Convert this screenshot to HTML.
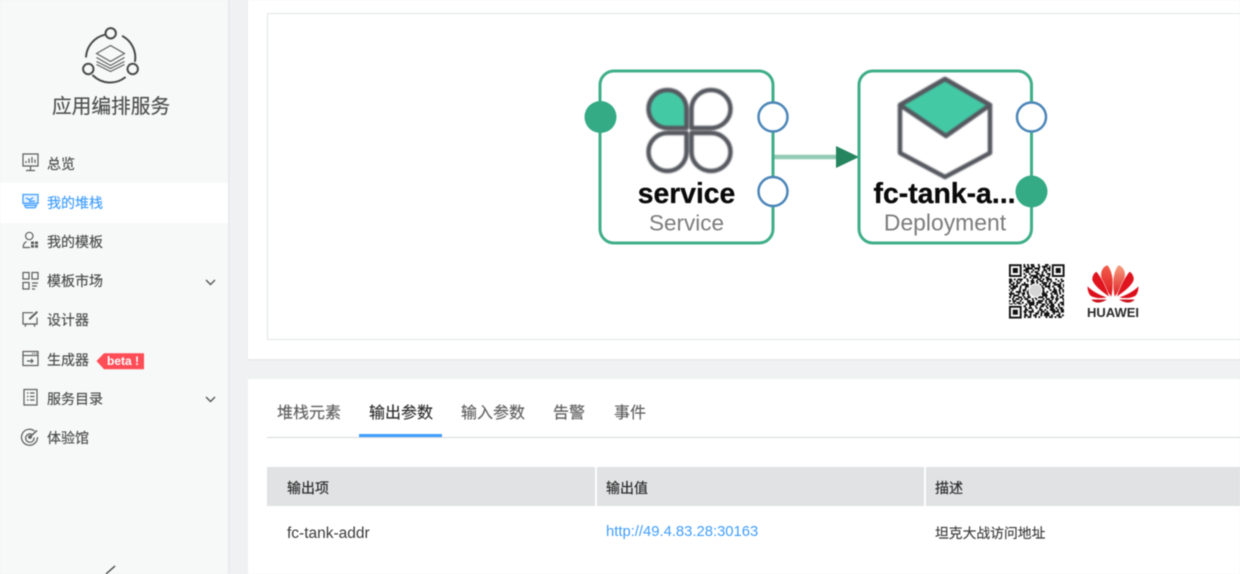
<!DOCTYPE html>
<html lang="zh">
<head>
<meta charset="utf-8">
<title>应用编排服务</title>
<style>
html,body{margin:0;padding:0;width:1240px;height:574px;overflow:hidden;background:#f0f1f2}
body{position:relative;font-family:"Liberation Sans","Noto Sans CJK SC",sans-serif;color:#555}
#wrap{position:absolute;left:0;top:0;width:1240px;height:574px;filter:blur(.4px)}
.abs{position:absolute;white-space:nowrap}
.side{position:absolute;left:0;top:0;width:228px;height:574px;background:#f7f8f8;box-shadow:1px 0 2px rgba(0,0,0,.05)}
.active{position:absolute;left:0;top:183px;width:228px;height:39.5px;background:#fff}
.m{position:absolute;left:47px;font-size:14px;line-height:20px;color:#4a4a4a;white-space:nowrap;-webkit-text-stroke:.15px currentColor}
.card{position:absolute;background:#fff}
.tab{position:absolute;top:402.5px;font-size:16px;line-height:22px;color:#606060;white-space:nowrap;-webkit-text-stroke:.15px currentColor}
.th{position:absolute;top:477.5px;font-size:14px;line-height:20px;color:#2c2c2c;white-space:nowrap;-webkit-text-stroke:.2px currentColor}
svg{position:absolute;left:0;top:0;overflow:visible}
.p1{stroke-dasharray:3.6 1.8 1.8 3.6 5.4 1.8 1.8 1.8 3.6 3.6 1.8 5.4}
.p2{stroke-dasharray:1.8 1.8 5.4 1.8 1.8 3.6 3.6 1.8 1.8 1.8 3.6 3.6}
.p3{stroke-dasharray:5.4 3.6 1.8 1.8 3.6 1.8 1.8 3.6 7.2 1.8}
.p4{stroke-dasharray:1.8 3.6 3.6 1.8 1.8 1.8 5.4 3.6 1.8 3.6}
.p5{stroke-dasharray:3.6 3.6 1.8 1.8 1.8 5.4 1.8 1.8 3.6 1.8 1.8 1.8}
</style>
</head>
<body>
<div id="wrap">
<div class="side"></div>
<div class="active"></div>
<div class="card" style="left:248px;top:0;width:992px;height:359px;box-shadow:0 1px 2px rgba(0,0,0,.05)"></div>
<div class="card" style="left:267px;top:13px;width:973px;height:327px;border:1px solid #e2e4e6;border-right:0;box-sizing:border-box"></div>
<div class="card" style="left:248px;top:379px;width:992px;height:195px"></div>

<div class="abs" style="left:52px;top:93px;font-size:19.7px;line-height:28px;color:#4d4d4d;-webkit-text-stroke:.15px currentColor">应用编排服务</div>
<div class="m" style="top:154px">总览</div>
<div class="m" style="top:193px;color:#409eff">我的堆栈</div>
<div class="m" style="top:232px">我的模板</div>
<div class="m" style="top:271px">模板市场</div>
<div class="m" style="top:310px">设计器</div>
<div class="m" style="top:349.5px">生成器</div>
<div class="m" style="top:389px">服务目录</div>
<div class="m" style="top:427.5px">体验馆</div>
<div class="abs" style="left:107px;top:354px;font-size:12px;line-height:15px;font-weight:bold;color:#fff;z-index:3">beta !</div>

<div class="tab" style="left:277px">堆栈元素</div>
<div class="tab" style="left:369px;color:#2e2e2e">输出参数</div>
<div class="tab" style="left:461px">输入参数</div>
<div class="tab" style="left:553px">告警</div>
<div class="tab" style="left:614px">事件</div>
<div class="abs" style="left:267px;top:436.5px;width:973px;height:1px;background:#d6d9da"></div>
<div class="abs" style="left:359px;top:434px;width:83px;height:3px;background:#409eff"></div>

<div class="abs" style="left:267px;top:467px;width:973px;height:39px;background:#e0e2e3"></div>
<div class="abs" style="left:595px;top:467px;width:2px;height:39px;background:#fff"></div>
<div class="abs" style="left:924px;top:467px;width:2px;height:39px;background:#fff"></div>
<div class="th" style="left:287px">输出项</div>
<div class="th" style="left:606px">输出值</div>
<div class="th" style="left:935px">描述</div>
<div class="abs" style="left:287px;top:523.5px;font-size:15.5px;line-height:20px;color:#3c3c3c">fc-tank-addr</div>
<div class="abs" style="left:606px;top:522px;font-size:14.8px;line-height:20px;color:#409eff">http://49.4.83.28:30163</div>
<div class="abs" style="left:935px;top:524px;font-size:13.8px;line-height:20px;color:#3c3c3c;-webkit-text-stroke:.15px currentColor">坦克大战访问地址</div>

<svg width="1240" height="574" viewBox="0 0 1240 574" xmlns="http://www.w3.org/2000/svg">
  <defs>
    <linearGradient id="hw1" x1="0" y1="0" x2="0" y2="1"><stop offset="0" stop-color="#f2604c"/><stop offset="1" stop-color="#e0141f"/></linearGradient>
    <linearGradient id="hw2" x1="0" y1="0" x2="0" y2="1"><stop offset="0" stop-color="#f6a080"/><stop offset="1" stop-color="#e01c22"/></linearGradient>
  </defs>
  <!-- sidebar logo -->
  <g fill="none" stroke="#4a4a4a" stroke-width="2" stroke-linecap="round">
    <circle cx="110.700" cy="33.300" r="5.200"/>
    <circle cx="88.300" cy="69" r="5.200"/>
    <circle cx="132.700" cy="69" r="5.200"/>
    <path d="M104.500 34.800A24.500 24.500 0 0 0 86 56.700"/>
    <path d="M122.800 36.200A24.500 24.500 0 0 1 135 61.200"/>
    <path d="M93 75.500A24.500 24.500 0 0 0 125 77.500"/>
  </g>
  <g fill="none" stroke="#5a5a5a" stroke-width="1.100">
    <path d="M110.500 45.500L124.500 53.500L110.500 61.500L96.500 53.500Z"/>
    <path d="M96.500 57.500L110.500 65.500L124.500 57.500"/>
    <path d="M96.500 61.500L110.500 68.500L124.500 61.500"/>
    <path d="M96.500 64.500L110.500 71.500L124.500 64.500"/>
  </g>

  <!-- sidebar icons -->
  <g fill="none" stroke="#5c5c5c" stroke-width="1.200">
    <path d="M23 154H38V166H23Z"/>
    <path d="M26 163V161M29 163V158.500M32 163V157M35 163V159.500"/>
    <path d="M30.500 166V170M26 170.500H35"/>

    <path d="M26.500 241.500C24 243 23 245 23.300 247.500H30"/>
    <circle cx="29.300" cy="236" r="3.700"/>
    <g fill="#5c5c5c" stroke="none">
      <rect x="31" y="241.500" width="3" height="2.700"/><rect x="35" y="241.500" width="3" height="2.700"/>
      <rect x="31" y="245" width="3" height="2.700"/><rect x="35" y="245" width="3" height="2.700"/>
    </g>

    <rect x="23" y="272.500" width="6" height="6.500"/>
    <rect x="32" y="272.500" width="6" height="6.500"/>
    <rect x="23" y="282.500" width="6" height="6.500"/>
    <path d="M32 283H38M32 286H37M32 289H35"/>

    <path d="M33 312.700H23V324H37V317.500"/>
    <path d="M26 324L25 326.700M34 324L35 326.700"/>
    <path d="M29.300 319.300L37.300 311.700" stroke-width="2"/>

    <rect x="23" y="351.500" width="15" height="14"/>
    <path d="M23 355.500H38"/>
    <path d="M32 353.500H37" stroke-dasharray="1 1"/>
    <path d="M27 361H33M31 359L33 361L31 363"/>

    <rect x="24" y="389.500" width="13" height="15.500"/>
    <path d="M27 393H28.500M27 396.500H28.500M27 400H28.500M30 393H34.500M30 396.500H34.500M30 400H34.500"/>

    <path d="M34.500 431A8 8 0 1 0 37.500 437"/>
    <path d="M32 434.500A4.200 4.200 0 1 0 34 437.500"/>
    <circle cx="30" cy="437" r="1.300" fill="#5c5c5c"/>
    <path d="M30 437L37 430.500" stroke-width="1.500"/>
  </g>
  <g fill="none" stroke="#409eff" stroke-width="1.300">
    <path d="M23 194.500H38V203.300H23Z" fill="#e6f2ff"/>
    <path d="M24.500 205.300H36.500L35 207.700H26Z"/>
    <path d="M26 198L30 200L33 197.500M29 201.500L35 201"/>
  </g>

  <!-- chevrons -->
  <g fill="none" stroke="#555" stroke-width="1.400">
    <path d="M206 280L210.500 284.500L215 280"/>
    <path d="M206 397L210.500 401.500L215 397"/>
    <path d="M106 574L115 566" stroke="#444"/>
  </g>

  <!-- beta tag -->
  <path d="M96.500 361L104 353.300H144V369.300H104Z" fill="#ff4d57"/>

  <!-- edge -->
  <path d="M773 157H836" stroke="#93cbb6" stroke-width="4.500"/>
  <path d="M836 146L859 157L836 168Z" fill="#24855f"/>

  <!-- nodes -->
  <g fill="#fff" stroke="#3fae8a" stroke-width="3">
    <rect x="600" y="71" width="173" height="172" rx="14"/>
    <rect x="859" y="71" width="172.500" height="172" rx="14"/>
  </g>

  <!-- service icon -->
  <g stroke="#55585f" stroke-width="4.500" fill="none" stroke-linejoin="round" style="filter:blur(.7px)">
    <path d="M686.500 128H667.500A19 19 0 1 1 686.500 109Z" fill="#44c9a5"/>
    <path d="M691.500 128V109A19.500 19 0 1 1 711 128Z"/>
    <path d="M686.500 133V152A19 19 0 1 1 667.500 133Z"/>
    <path d="M691.500 133H711A19.500 19 0 1 1 691.500 152Z"/>
  </g>

  <!-- deployment icon -->
  <g stroke="#55585f" stroke-width="4.500" stroke-linejoin="round" style="filter:blur(.8px)">
    <path d="M900 105L945 79L990 105V153L945 177L900 153Z" fill="#fff"/>
    <path d="M900 105L945 79L990 105L946 136Z" fill="#44c9a5"/>
  </g>

  <!-- node text -->
  <text x="686.500" y="203" font-family="Liberation Sans" font-size="28.300" font-weight="700" fill="#0a0a0a" stroke="#0a0a0a" stroke-width=".3" text-anchor="middle">service</text>
  <text x="686.500" y="230.500" font-family="Liberation Sans" font-size="22.500" fill="#7c7c7c" text-anchor="middle">Service</text>
  <text x="873.500" y="203" font-family="Liberation Sans" font-size="28.400" font-weight="700" fill="#0a0a0a" stroke="#0a0a0a" stroke-width=".3">fc-tank-a...</text>
  <text x="945" y="230.500" font-family="Liberation Sans" font-size="22.900" fill="#7c7c7c" text-anchor="middle">Deployment</text>

  <!-- ports -->
  <circle cx="600.500" cy="117" r="16" fill="#34ab85"/>
  <g fill="#fff" stroke="#4c86b8" stroke-width="2.500">
    <circle cx="773" cy="117" r="14.500"/>
    <circle cx="773" cy="191.500" r="14.500"/>
    <circle cx="1031.500" cy="117" r="14.500"/>
  </g>
  <circle cx="1031.500" cy="191.500" r="16" fill="#34ab85"/>

  <!-- QR -->
  <g style="filter:blur(.35px)">
    <g stroke="#111" stroke-width="1.900" fill="none">
      <path class="p1" d="M1009 264.900H1064"/>
      <path class="p2" style="stroke-dashoffset:3" d="M1009 266.700H1064"/>
      <path class="p3" style="stroke-dashoffset:7" d="M1009 268.500H1064"/>
      <path class="p4" d="M1009 270.300H1064"/>
      <path class="p5" style="stroke-dashoffset:5" d="M1009 272.100H1064"/>
      <path class="p1" style="stroke-dashoffset:9" d="M1009 273.900H1064"/>
      <path class="p3" style="stroke-dashoffset:2" d="M1009 275.700H1064"/>
      <path class="p2" style="stroke-dashoffset:12" d="M1009 277.500H1064"/>
      <path class="p4" style="stroke-dashoffset:6" d="M1009 279.300H1064"/>
      <path class="p5" d="M1009 281.100H1064"/>
      <path class="p1" style="stroke-dashoffset:14" d="M1009 282.900H1064"/>
      <path class="p3" style="stroke-dashoffset:11" d="M1009 284.700H1064"/>
      <path class="p2" d="M1009 286.500H1064"/>
      <path class="p4" style="stroke-dashoffset:13" d="M1009 288.300H1064"/>
      <path class="p5" style="stroke-dashoffset:8" d="M1009 290.100H1064"/>
      <path class="p1" style="stroke-dashoffset:4" d="M1009 291.900H1064"/>
      <path class="p3" d="M1009 293.700H1064"/>
      <path class="p4" style="stroke-dashoffset:10" d="M1009 295.500H1064"/>
      <path class="p2" style="stroke-dashoffset:7" d="M1009 297.300H1064"/>
      <path class="p5" style="stroke-dashoffset:15" d="M1009 299.100H1064"/>
      <path class="p1" style="stroke-dashoffset:18" d="M1009 300.900H1064"/>
      <path class="p3" style="stroke-dashoffset:5" d="M1009 302.700H1064"/>
      <path class="p2" style="stroke-dashoffset:16" d="M1009 304.500H1064"/>
      <path class="p4" style="stroke-dashoffset:3" d="M1009 306.300H1064"/>
      <path class="p5" style="stroke-dashoffset:11" d="M1009 308.100H1064"/>
      <path class="p1" style="stroke-dashoffset:6" d="M1009 309.900H1064"/>
      <path class="p3" style="stroke-dashoffset:13" d="M1009 311.700H1064"/>
      <path class="p4" style="stroke-dashoffset:8" d="M1009 313.500H1064"/>
      <path class="p2" style="stroke-dashoffset:1" d="M1009 315.300H1064"/>
      <path class="p5" style="stroke-dashoffset:12" d="M1009 317.100H1064"/>
    </g>
    <g fill="#fff">
      <rect x="1008" y="263" width="15.500" height="15.500"/>
      <rect x="1050.500" y="263" width="15" height="15.500"/>
      <rect x="1008" y="304.500" width="15.500" height="15"/>
      <circle cx="1035.500" cy="290.500" r="7"/>
    </g>
    <circle cx="1035.500" cy="290.500" r="6" fill="#d5d5d5"/>
    <g fill="none" stroke="#111" stroke-width="1.900">
      <rect x="1009.900" y="265.200" width="10.800" height="10.800"/>
      <rect x="1052.800" y="265.200" width="10.800" height="10.800"/>
      <rect x="1009.900" y="306.800" width="10.800" height="10.800"/>
    </g>
    <g fill="#111">
      <rect x="1012.800" y="268" width="5" height="5"/>
      <rect x="1055.700" y="268" width="5" height="5"/>
      <rect x="1012.800" y="309.700" width="5" height="5"/>
    </g>
  </g>

  <!-- Huawei -->
  <g stroke="#fff" stroke-width=".5" style="filter:blur(.3px)">
    <path d="M1111.500 297C1104.500 288.500 1100 280 1101 272.500C1102 268.500 1104.500 265.800 1107.500 265C1111 269 1113 276 1113 283C1113 288 1112.300 293 1111.500 297Z" fill="url(#hw1)"/>
    <path d="M1114.500 297C1121.500 288.500 1126 280 1125 272.500C1124 268.500 1121.500 265.800 1118.500 265C1115 269 1113 276 1113 283C1113 288 1113.700 293 1114.500 297Z" fill="url(#hw2)"/>
    <path d="M1109.500 297C1100.500 291 1093.500 285 1092 279.500C1092 276.500 1093.500 273 1096.500 271.500C1101 277 1105.500 285 1109.500 297Z" fill="#e0141f"/>
    <path d="M1116.500 297C1125.500 291 1132.500 285 1134 279.500C1134 276.500 1132.500 273 1129.500 271.500C1125 277 1120.500 285 1116.500 297Z" fill="#e0141f"/>
    <path d="M1107.500 297.500C1100 295 1092 291 1087.500 286C1087 289 1088 293.500 1090.500 296C1095 298.500 1101 299 1107.500 297.500Z" fill="#dc101c"/>
    <path d="M1118.500 297.500C1126 295 1134 291 1138.500 286C1139 289 1138 293.500 1135.500 296C1131 298.500 1125 299 1118.500 297.500Z" fill="#dc101c"/>
    <path d="M1107.500 299.300H1091C1092.500 301.500 1095 302.800 1098 302.800C1101 302.800 1104.500 301.500 1107.500 299.300Z" fill="#c9101a"/>
    <path d="M1118.500 299.300H1135C1133.500 301.500 1131 302.800 1128 302.800C1125 302.800 1121.500 301.500 1118.500 299.300Z" fill="#c9101a"/>
  </g>
  <text x="1087" y="317" font-family="Liberation Sans" font-size="13" font-weight="700" fill="#2a2a2a" textLength="52" lengthAdjust="spacingAndGlyphs">HUAWEI</text>
</svg>
</div>
</body>
</html>
